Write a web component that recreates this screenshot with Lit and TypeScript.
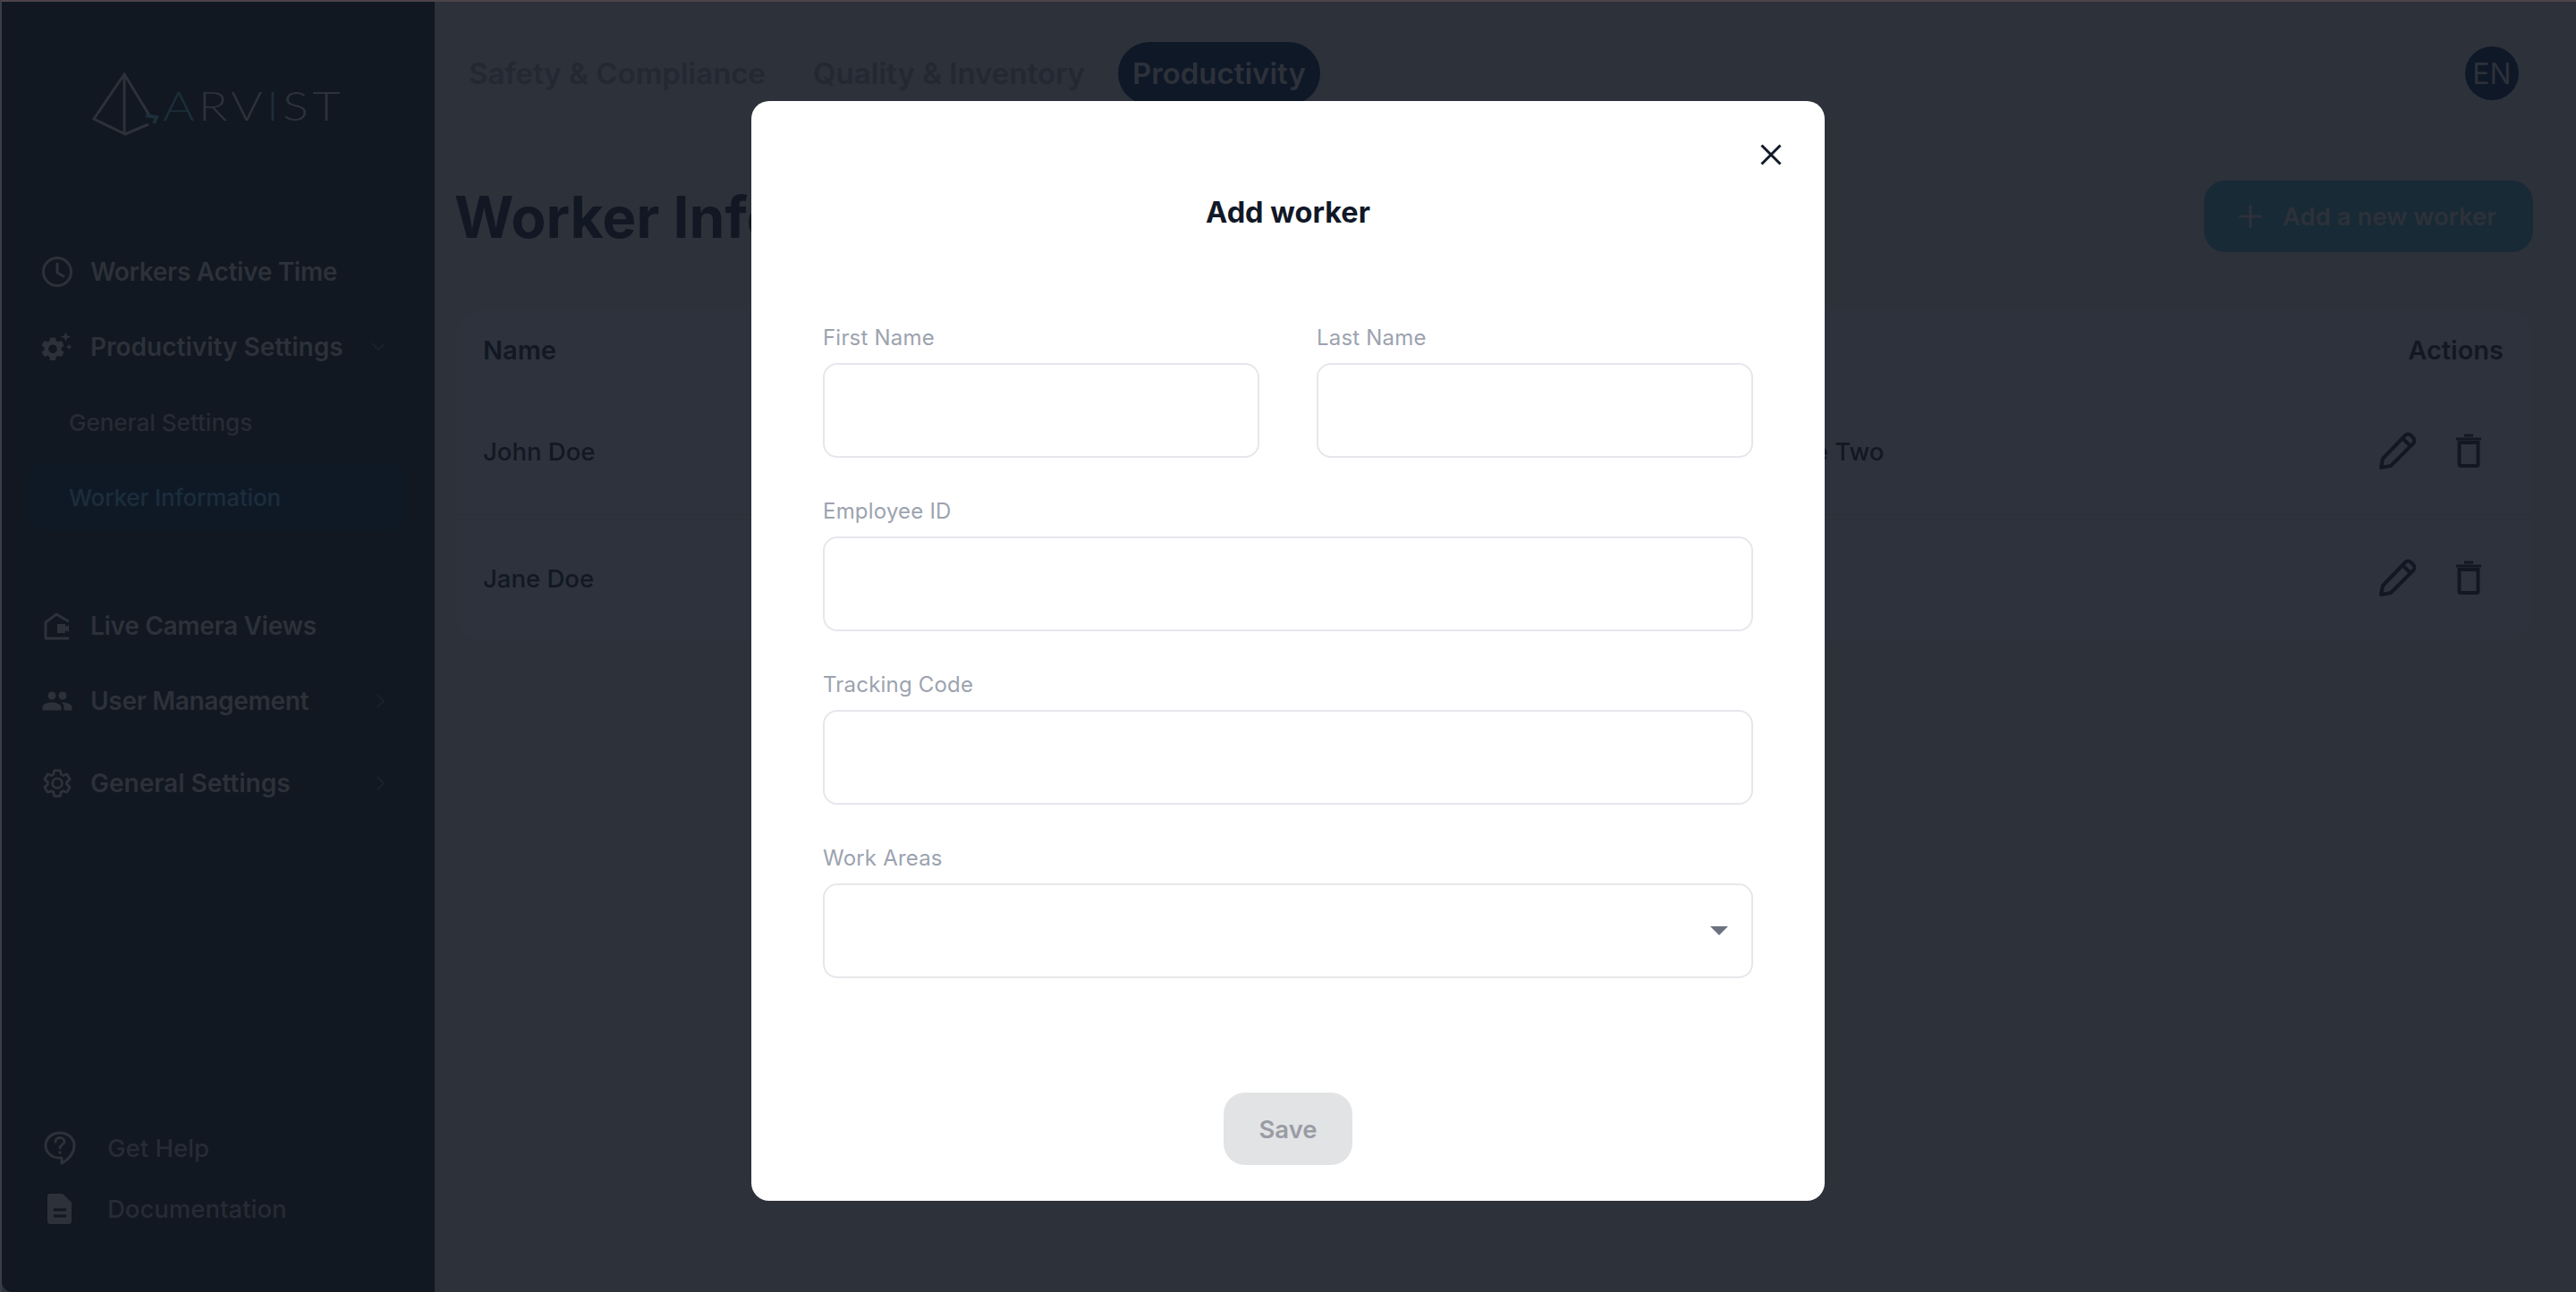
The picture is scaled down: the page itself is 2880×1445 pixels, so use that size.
import { LitElement, html, css, svg } from "lit";
import { customElement } from "lit/decorators.js";

const GEAR = "M19.14 12.94c.04-.3.06-.61.06-.94 0-.32-.02-.64-.07-.94l2.03-1.58c.18-.14.23-.41.12-.61l-1.92-3.32c-.12-.22-.37-.29-.59-.22l-2.39.96c-.5-.38-1.03-.7-1.62-.94l-.36-2.54c-.04-.24-.24-.41-.48-.41h-3.84c-.24 0-.43.17-.47.41l-.36 2.54c-.59.24-1.13.57-1.62.94l-2.39-.96c-.22-.08-.47 0-.59.22L2.74 8.87c-.12.21-.08.47.12.61l2.03 1.58c-.05.3-.09.63-.09.94s.02.64.07.94l-2.03 1.58c-.18.14-.23.41-.12.61l1.92 3.32c.12.22.37.29.59.22l2.39-.96c.5.38 1.03.7 1.62.94l.36 2.54c.05.24.24.41.48.41h3.84c.24 0 .44-.17.47-.41l.36-2.54c.59-.24 1.13-.56 1.62-.94l2.39.96c.22.08.47 0 .59-.22l1.92-3.32c.12-.22.07-.47-.12-.61l-2.01-1.58zM12 15.6c-1.98 0-3.6-1.62-3.6-3.6s1.62-3.6 3.6-3.6 3.6 1.62 3.6 3.6-1.62 3.6-3.6 3.6z";

const icons = {
  clock: svg`<svg width="36" height="36" viewBox="0 0 36 36" fill="none" stroke="currentColor" stroke-width="3"><circle cx="18" cy="18" r="15.5"/><path d="M18 9v10l7 4" stroke-linecap="round"/></svg>`,
  spark: svg`<svg width="38" height="36" viewBox="0 0 38 36" fill="currentColor"><g transform="translate(-3 3.500) scale(1.4)"><path fill-rule="evenodd" d="${GEAR}"/></g><path d="M29 0l1.6 4.4L35 6l-4.4 1.6L29 12l-1.6-4.4L23 6l4.4-1.6zM33 14l1 3 3 1-3 1-1 3-1-3-3-1 3-1z"/></svg>`,
  house: svg`<svg width="30" height="32" viewBox="0 0 30 32" fill="none" stroke="currentColor" stroke-width="3"><path d="M2 30V12L14 3l14 8"/><path d="M1 30h27"/><path fill="currentColor" stroke="none" d="M15 14h9v3l4-2v8l-4-2v3h-9z"/></svg>`,
  people: svg`<svg width="38" height="38" viewBox="0 0 24 24" fill="currentColor"><path d="M16 11c1.66 0 2.99-1.34 2.99-3S17.66 5 16 5c-1.66 0-3 1.34-3 3s1.34 3 3 3zm-8 0c1.66 0 2.99-1.34 2.99-3S9.66 5 8 5C6.34 5 5 6.34 5 8s1.34 3 3 3zm0 2c-2.33 0-7 1.17-7 3.5V19h14v-2.5c0-2.33-4.67-3.5-7-3.5zm8 0c-.29 0-.62.02-.97.05 1.16.84 1.97 1.97 1.97 3.45V19h6v-2.5c0-2.33-4.67-3.5-7-3.5z"/></svg>`,
  gear: svg`<svg width="38" height="38" viewBox="0 0 24 24" fill="none" stroke="currentColor" stroke-width="1.9"><path d="${GEAR}"/></svg>`,
  help: svg`<svg width="36" height="40" viewBox="0 0 36 40" fill="none" stroke="currentColor" stroke-width="3"><path d="M18 3C9 3 2 9 2 17s7 14 15 14h3v6c7-4 14-11 14-20C34 9 27 3 18 3z" stroke-linejoin="round"/><path d="M13 13c0-3 2.400-4.500 5-4.500s5 1.700 5 4.300c0 3.500-5 3.700-5 7.200" stroke-linecap="round"/><circle cx="18" cy="25" r="1.800" fill="currentColor" stroke="none"/></svg>`,
  doc: svg`<svg width="28" height="34" viewBox="0 0 28 34"><path fill="currentColor" d="M3 0h14l10 10v21a3 3 0 0 1-3 3H3a3 3 0 0 1-3-3V3a3 3 0 0 1 3-3z"/><path stroke="#111821" stroke-width="3" d="M7 18h14M7 25h14"/></svg>`,
  pencil: svg`<svg width="44" height="44" viewBox="0 0 44 44" fill="none" stroke="currentColor" stroke-width="4" stroke-linejoin="round"><path d="M3 41l2-10L30 5a4.500 4.500 0 0 1 6.500 0l2.500 2.500a4.500 4.500 0 0 1 0 6.500L14 39z"/><path d="M27 8l9 9"/></svg>`,
  trash: svg`<svg width="30" height="38" viewBox="0 0 30 38" fill="none" stroke="currentColor" stroke-width="4"><path d="M4.500 10v24a2 2 0 0 0 2 2h17a2 2 0 0 0 2-2V10z"/><path d="M1 6h28" stroke-width="3"/><path d="M10 2h10" stroke-width="3"/></svg>`,
  plus: svg`<svg width="28" height="28" viewBox="0 0 28 28" stroke="currentColor" stroke-width="3"><path d="M14 1v26M1 14h26"/></svg>`,
  down: svg`<svg width="18" height="12" viewBox="0 0 18 12" fill="none" stroke="currentColor" stroke-width="2"><path d="M2 2l7 7 7-7"/></svg>`,
  right: svg`<svg width="12" height="18" viewBox="0 0 12 18" fill="none" stroke="currentColor" stroke-width="2"><path d="M2 2l7 7-7 7"/></svg>`,
  close: svg`<svg width="24" height="24" viewBox="0 0 24 24" stroke="#111827" stroke-width="3"><path d="M1.500 1.500l21 21M22.500 1.500l-21 21"/></svg>`,
  caret: svg`<svg width="20" height="10" viewBox="0 0 20 10" fill="#6b7280"><path d="M0 0h20L10 10z"/></svg>`,
  pyramid: svg`<svg width="76" height="72" viewBox="0 0 76 72" fill="none" stroke="#2d313a" stroke-width="3"><path d="M64 48L36 2 2 52l35 17 26-11"/><path d="M36 2v67"/><path d="M60 48l12 2-3 7" stroke="#1c2f3b" stroke-width="4"/></svg>`,
};

@customElement("app-root")
export class AppRoot extends LitElement {
  static styles = css`
    :host {
      display: block;
      width: 100%;
      height: 100vh;
      font-family: "Inter", "Noto Sans", sans-serif;
      color: #2d313a;
      background: #2d313a;
    }
    * { box-sizing: border-box; }
    .window {
      height: 100%;
      display: flex;
      border-top: 2px solid #4d4348;
      border-left: 2px solid #3a3d47;
      overflow: hidden;
    }
    .sidebar {
      width: 484px;
      flex: none;
      display: flex;
      flex-direction: column;
      background: #111821;
      border-bottom-left-radius: 12px;
      padding-bottom: 59px;
    }
    .logo {
      height: 260px;
      display: flex;
      align-items: flex-start;
      padding: 79px 0 0 101px;
    }
    .word {
      margin: 14px 0 0 3px;
      font-family: "Lato", sans-serif;
      font-weight: 300;
      font-size: 46px;
      line-height: 46px;
      letter-spacing: 3.5px;
      color: #2d313a;
      transform: scaleX(1.18);
      transform-origin: left center;
    }
    .word b { font-weight: 300; color: #1c2f3b; }
    .item {
      height: 84px;
      display: flex;
      align-items: center;
      padding-right: 54px;
      font-size: 28px;
      font-weight: 600;
    }
    .icon {
      width: 99px;
      flex: none;
      display: flex;
      align-items: center;
      justify-content: center;
      padding: 0 19px 0 44px;
    }
    .label { flex: 1; }
    .tight .label { letter-spacing: -0.3px; }
    .chev { color: #1b212b; display: flex; }
    .sub {
      height: 84px;
      display: flex;
      align-items: center;
      padding-left: 75px;
      font-size: 26px;
      font-weight: 500;
      color: #272b35;
    }
    .highlight { padding: 0 34px 0 30px; }
    .highlight span {
      width: 100%;
      height: 74px;
      display: flex;
      align-items: center;
      padding-left: 45px;
      border-radius: 16px;
      background: #0f1926;
      color: #1c2d3b;
      letter-spacing: -0.15px;
    }
    .gap-lg { margin-top: 60px; }
    .gap-sm { margin-top: 8px; }
    .spacer { flex: 1; }
    .foot {
      height: 68px;
      display: flex;
      align-items: center;
      font-size: 27.5px;
      font-weight: 500;
      color: #272b35;
    }
    .ficon {
      width: 118px;
      flex: none;
      display: flex;
      justify-content: center;
      padding: 0 35px 0 47px;
      color: #2d313a;
    }
    .main {
      flex: 1;
      min-width: 0;
      padding: 0 48px 0 22px;
    }
    .top {
      height: 160px;
      display: flex;
      align-items: center;
      gap: 21px;
    }
    .tab {
      height: 70px;
      padding: 0 16px;
      display: flex;
      align-items: center;
      font-size: 33px;
      font-weight: 600;
      color: #232833;
    }
    .tab.on {
      background: #0f1827;
      color: #2d313a;
      border-radius: 35px;
    }
    .en {
      margin-left: auto;
      margin-right: 16px;
      width: 60px;
      height: 60px;
      border-radius: 50%;
      background: #0f1827;
      display: flex;
      align-items: center;
      justify-content: center;
      font-size: 32px;
    }
    .head {
      margin-top: 40px;
      height: 80px;
      display: flex;
      align-items: center;
      justify-content: space-between;
    }
    h1 {
      margin: 0;
      font-size: 64px;
      font-weight: 700;
      color: #111823;
    }
    .add {
      width: 368px;
      height: 80px;
      border-radius: 24px;
      background: #182a35;
      display: flex;
      align-items: center;
      gap: 22px;
      padding-left: 38px;
      font-size: 27.5px;
      font-weight: 600;
    }
    .add svg { flex: none; }
    .table {
      margin: 65px 0 0 2px;
      height: 370px;
      border-radius: 28px;
      background: #2e323c;
      color: #111823;
      font-size: 27.5px;
    }
    .row {
      display: grid;
      grid-template-columns: 1437px 1fr auto;
      align-items: center;
      padding: 0 33px 0 30px;
      height: 141px;
      border-bottom: 1px solid #2b2f38;
      font-weight: 500;
    }
    .row:last-child { border-bottom: 0; }
    .row.hd {
      height: 88px;
      border-bottom: 0;
      font-size: 29px;
      font-weight: 600;
    }
    .actions {
      display: flex;
      align-items: center;
      gap: 42px;
      padding-right: 24px;
      margin-top: -2px;
    }
    .overlay {
      position: fixed;
      inset: 0;
      display: flex;
      justify-content: center;
      align-items: flex-start;
      padding-top: 113px;
    }
    .modal {
      position: relative;
      width: 1200px;
      height: 1230px;
      background: #fff;
      border-radius: 20px;
      padding: 0 80px;
      display: flex;
      flex-direction: column;
    }
    .x {
      position: absolute;
      top: 48px;
      right: 48px;
      width: 24px;
      height: 24px;
      padding: 0;
      border: 0;
      background: none;
      display: flex;
    }
    h2 {
      margin: 0;
      height: 251px;
      padding-top: 101px;
      text-align: center;
      font-size: 32.5px;
      line-height: 48px;
      font-weight: 700;
      color: #111827;
    }
    .form {
      display: grid;
      grid-template-columns: 488px 488px;
      column-gap: 64px;
      row-gap: 46px;
    }
    .wide { grid-column: span 2; }
    label {
      display: block;
      height: 42px;
      margin-top: -1px;
      margin-bottom: 1px;
      font-size: 24px;
      line-height: 30px;
      letter-spacing: 0.2px;
      color: #9ca3af;
    }
    .input {
      position: relative;
      display: block;
      width: 100%;
      height: 106px;
      border: 2px solid #e5e7eb;
      border-radius: 16px;
      background: #fff;
    }
    .input svg {
      position: absolute;
      right: 26px;
      top: 46px;
    }
    .actions-row {
      margin-top: auto;
      padding-bottom: 40px;
      display: flex;
      justify-content: center;
    }
    .save {
      width: 144px;
      height: 81px;
      border: 0;
      border-radius: 24px;
      background: #e2e3e5;
      color: #9a9ca4;
      font-family: inherit;
      font-size: 27.5px;
      font-weight: 600;
    }
  `;

  private navItem(icon: unknown, text: string, chev?: unknown, cls = "") {
    return html`<div class="item ${cls}">
      <span class="icon">${icon}</span>
      <span class="label">${text}</span>
      ${chev ? html`<span class="chev">${chev}</span>` : ""}
    </div>`;
  }

  private row(name: string, area: string) {
    return html`<div class="row">
      <span>${name}</span><span>${area}</span>
      <span class="actions">${icons.pencil}${icons.trash}</span>
    </div>`;
  }

  private field(text: string, wide = false, caret = false) {
    return html`<div class=${wide ? "wide" : ""}>
      <label>${text}</label>
      <div class="input">${caret ? icons.caret : ""}</div>
    </div>`;
  }

  render() {
    return html`
      <div class="window">
        <aside class="sidebar">
          <div class="logo">
            ${icons.pyramid}
            <span class="word"><b>A</b>RV<b>I</b>ST</span>
          </div>
          ${this.navItem(icons.clock, "Workers Active Time", undefined, "tight")}
          ${this.navItem(icons.spark, "Productivity Settings", icons.down)}
          <div class="sub">General Settings</div>
          <div class="sub highlight"><span>Worker Information</span></div>
          ${this.navItem(icons.house, "Live Camera Views", undefined, "gap-lg tight")}
          ${this.navItem(icons.people, "User Management", icons.right, "tight")}
          ${this.navItem(icons.gear, "General Settings", icons.right, "gap-sm")}
          <div class="spacer"></div>
          <div class="foot"><span class="ficon">${icons.help}</span>Get Help</div>
          <div class="foot"><span class="ficon">${icons.doc}</span>Documentation</div>
        </aside>
        <main class="main">
          <div class="top">
            <div class="tab">Safety &amp; Compliance</div>
            <div class="tab">Quality &amp; Inventory</div>
            <div class="tab on">Productivity</div>
            <div class="en">EN</div>
          </div>
          <div class="head">
            <h1>Worker Information</h1>
            <div class="add">${icons.plus}<span>Add a new worker</span></div>
          </div>
          <div class="table">
            <div class="row hd"><span>Name</span><span></span><span>Actions</span></div>
            ${this.row("John Doe", "Zone Two")}
            ${this.row("Jane Doe", "")}
          </div>
        </main>
      </div>
      <div class="overlay">
        <div class="modal">
          <button class="x">${icons.close}</button>
          <h2>Add worker</h2>
          <div class="form">
            ${this.field("First Name")}
            ${this.field("Last Name")}
            ${this.field("Employee ID", true)}
            ${this.field("Tracking Code", true)}
            ${this.field("Work Areas", true, true)}
          </div>
          <div class="actions-row"><button class="save">Save</button></div>
        </div>
      </div>
    `;
  }
}
